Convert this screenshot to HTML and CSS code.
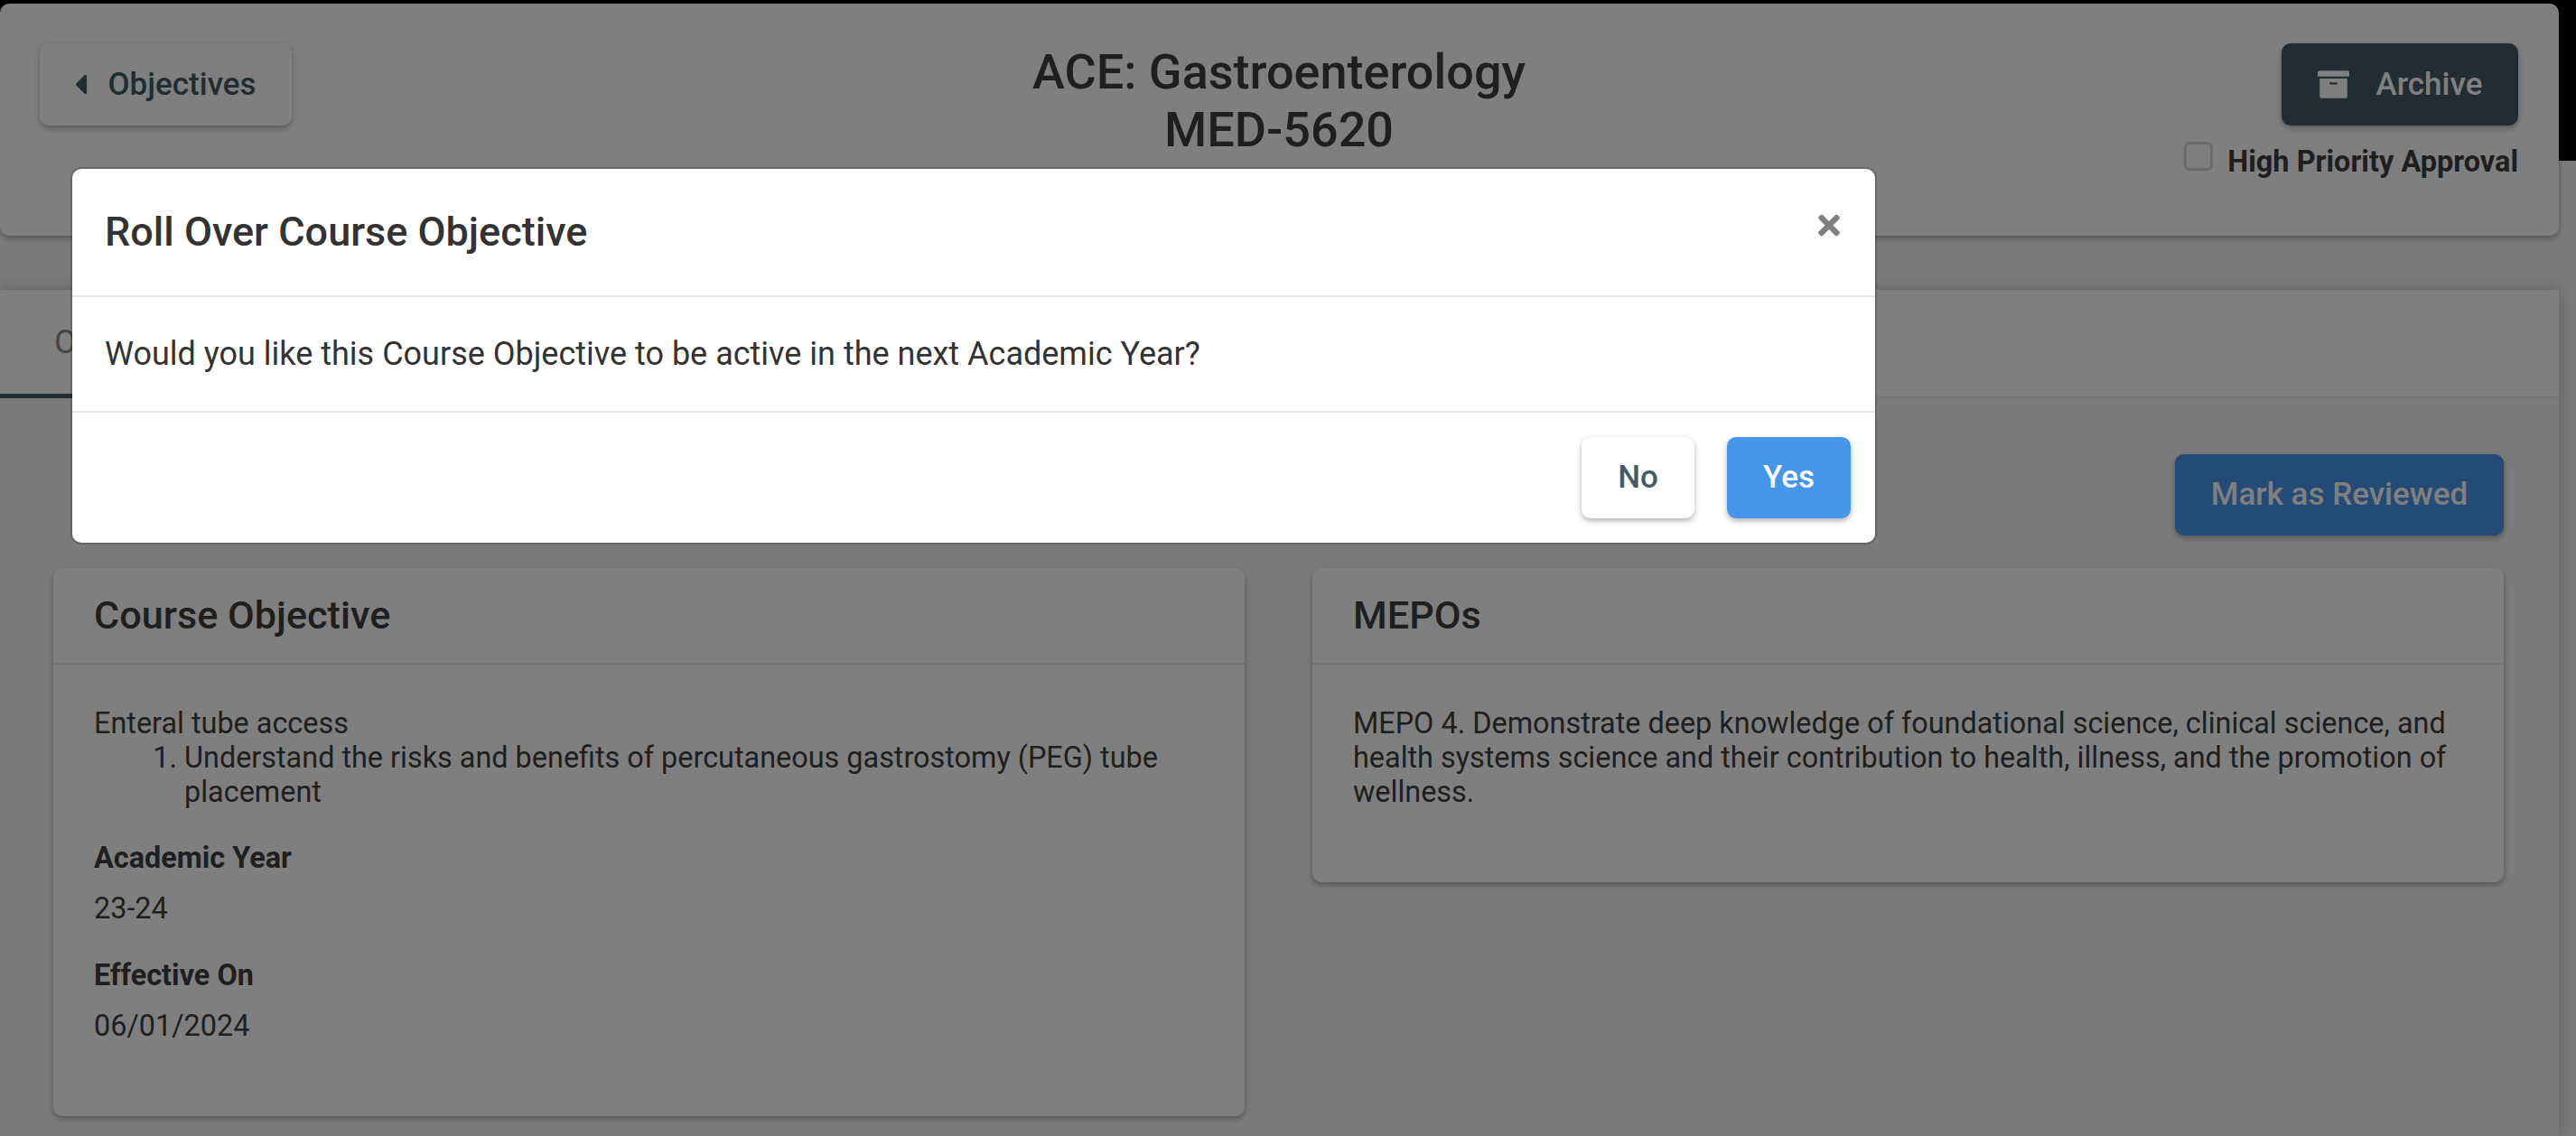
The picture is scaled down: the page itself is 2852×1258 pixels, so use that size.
FILE: index.html
```html
<!DOCTYPE html>
<html lang="en">
<head>
<meta charset="utf-8">
<title>Roll Over Course Objective</title>
<link rel="stylesheet" href="styles.css">
</head>
<body>
<div class="shell">
  <main class="main">
    <header class="head">
      <div class="head-left">
        <button class="btn btn-light btn-back">
          <svg class="caret" viewBox="20 110 175 292"><path d="M192 127.338v257.324c0 17.818-21.543 26.741-34.142 14.142L29.196 270.142c-7.81-7.81-7.81-20.474 0-28.284l128.662-128.662c12.599-12.6 34.142-3.676 34.142 14.142z"/></svg>
          Objectives
        </button>
      </div>
      <h1 class="title">ACE: Gastroenterology<br>MED-5620</h1>
      <div class="head-right">
        <button class="btn btn-dark">
          <svg class="archive" viewBox="0 32 512 448"><path d="M32 448c0 17.7 14.3 32 32 32h384c17.700 0 32-14.300 32-32V160H32v288zm160-212c0-6.600 5.400-12 12-12h104c6.600 0 12 5.400 12 12v8c0 6.600-5.400 12-12 12H204c-6.600 0-12-5.400-12-12v-8zM480 32H32C14.300 32 0 46.300 0 64v48c0 8.800 7.200 16 16 16h480c8.800 0 16-7.200 16-16V64c0-17.700-14.300-32-32-32z"/></svg>
          Archive
        </button>
        <div class="priority">
          <span class="check"></span>
          <span class="priority-label">High Priority Approval</span>
        </div>
      </div>
    </header>

    <section class="panel">
      <nav class="tabs"><span class="tab">Objectives</span></nav>
      <div class="panel-body">
        <div class="actions"><button class="btn btn-blue">Mark as Reviewed</button></div>
        <div class="cards">
          <article class="card card-objective">
            <h2 class="card-title">Course Objective</h2>
            <div class="card-body">
              <div class="rich">Enteral tube access</div>
              <ol class="list">
                <li>Understand the risks and benefits of percutaneous gastrostomy (PEG) tube placement</li>
              </ol>
              <div class="label label-first">Academic Year</div>
              <div class="value">23-24</div>
              <div class="label">Effective On</div>
              <div class="value">06/01/2024</div>
            </div>
          </article>
          <article class="card card-mepo">
            <h2 class="card-title">MEPOs</h2>
            <div class="card-body">
              <div class="rich">MEPO 4. Demonstrate deep knowledge of foundational science, clinical science, and health systems science and their contribution to health, illness, and the promotion of wellness.</div>
            </div>
          </article>
        </div>
      </div>
    </section>
  </main>
  <aside class="edge"><div class="edge-dark"></div></aside>
</div>

<div class="overlay"></div>

<div class="modal">
  <div class="modal-head">
    <h3 class="modal-title">Roll Over Course Objective</h3>
    <svg class="close" viewBox="0 70 352 372"><path d="M242.720 256l100.070-100.070c12.280-12.280 12.280-32.190 0-44.480l-22.240-22.240c-12.280-12.280-32.190-12.280-44.480 0L176 189.280 75.930 89.210c-12.280-12.280-32.190-12.280-44.480 0L9.210 111.450c-12.280 12.280-12.280 32.190 0 44.480L109.280 256 9.210 356.070c-12.280 12.280-12.280 32.190 0 44.480l22.240 22.240c12.280 12.280 32.200 12.280 44.480 0L176 322.720l100.070 100.070c12.280 12.280 32.200 12.280 44.480 0l22.240-22.240c12.280-12.280 12.280-32.190 0-44.480L242.720 256z"/></svg>
  </div>
  <div class="modal-body">Would you like this Course Objective to be active in the next Academic Year?</div>
  <div class="modal-foot">
    <button class="btn btn-white">No</button>
    <button class="btn btn-primary">Yes</button>
  </div>
</div>
</body>
</html>
```
FILE: styles.css
```css
* { box-sizing: border-box; }
html, body { margin: 0; height: 100%; }
body {
  position: relative;
  width: 2852px;
  height: 1258px;
  overflow: hidden;
  background: #f5f5f5;
  font-family: Roboto, "Liberation Sans", sans-serif;
  color: #3f3f3f;
}
.shell { display: flex; height: 1258px; }
.main { width: 2833px; flex: none; padding-top: 4px; background: linear-gradient(#000 0 14px, #f5f5f5 14px); }
.edge { flex: 1; }
.edge-dark { height: 178px; background: #000; }

.overlay { position: absolute; inset: 0; background: rgba(0, 0, 0, .5); }

.btn {
  display: inline-flex;
  align-items: center;
  justify-content: center;
  border: 0;
  border-radius: 10px;
  padding: 0 0 1px;
  font-family: inherit;
  font-weight: 500;
  font-size: 35px;
  height: 91px;
  box-shadow: 0 3px 6px rgba(0, 0, 0, .3);
}
.btn-light { background: #fff; color: #455a64; }
.btn-dark { background: #455a64; color: #fff; }
.btn-blue { background: #4696ec; color: #fff; }
.btn-white { background: #fff; color: #455a64; }
.btn-primary { background: #4696ec; color: #fff; }

.head {
  height: 257px;
  background: #fff;
  border-radius: 10px;
  box-shadow: 0 3px 6px rgba(0, 0, 0, .3);
  display: grid;
  grid-template-columns: 1fr auto 1fr;
  padding: 44px 45px 0 44px;
}
.head-left { display: flex; align-items: flex-start; }
.btn-back { width: 279px; gap: 22px; }
.caret { width: 14px; height: 21px; fill: #455a64; }
.title {
  margin: 0;
  text-align: center;
  font-size: 54px;
  line-height: 64px;
  font-weight: 500;
  color: #3f3f3f;
}
.head-right { display: flex; flex-direction: column; align-items: flex-end; }
.btn-dark { width: 262px; gap: 30px; }
.archive { width: 35px; height: 31px; fill: #fff; }
.priority { display: flex; align-items: flex-start; gap: 16px; margin-top: 18px; }
.check { width: 32px; height: 32px; background: #fff; border: 3px solid #d4d4d4; border-radius: 6px; }
.priority-label { font-size: 32.5px; font-weight: 700; line-height: 38px; margin-top: 3px; color: #3f3f3f; }

.panel { margin-top: 60px; box-shadow: 0 0 18px rgba(0, 0, 0, .2); height: 937px; }
.tabs { height: 120px; background: #fff; border-bottom: 2px solid #ececec; }
.tab { display: inline-block; height: 120px; padding: 37px 60px 0; font-size: 36px; border-bottom: 5px solid #455a64; color: #8c8c8c; }
.panel-body { padding: 62px 61px 0 59px; }
.actions { display: flex; justify-content: flex-end; }
.btn-blue { width: 364px; height: 90px; }
.cards { display: flex; align-items: flex-start; gap: 75px; margin-top: 36px; }
.card {
  width: 1320px;
  background: #fff;
  border-radius: 10px;
  box-shadow: 0 3px 6px rgba(0, 0, 0, .3);
}
.card-objective { height: 607px; }
.card-mepo { height: 348px; }
.card-title {
  margin: 0;
  height: 107px;
  padding: 28px 45px 0;
  font-size: 43.2px;
  line-height: 50px;
  font-weight: 500;
  border-bottom: 2px solid #e3e6ea;
  color: #3f3f3f;
}
.card-body { padding: 46px 45px 0; font-size: 32.4px; line-height: 38px; }
.list { margin: 0; padding-left: 100px; }
.label { font-weight: 700; margin-top: 36px; }
.label-first { margin-top: 35px; }
.value { margin-top: 18px; }

.modal {
  position: absolute;
  left: 80px;
  top: 187px;
  width: 1996px;
  height: 414px;
  background: #fff;
  border-radius: 10px;
  box-shadow: 0 0 0 2px rgba(0, 0, 0, .18);
}
.modal-head {
  height: 142px;
  border-bottom: 2px solid #e3e6ea;
  padding: 44px 38px 0 36px;
  display: flex;
  justify-content: space-between;
  align-items: flex-start;
}
.modal-title { margin: 0; font-size: 45px; line-height: 52px; font-weight: 500; color: #333; }
.close { width: 26px; height: 25px; margin-top: 6px; fill: #808080; }
.modal-body {
  height: 128px;
  border-bottom: 2px solid #e3e6ea;
  padding: 41px 36px 0;
  font-size: 36px;
  line-height: 44px;
  color: #333;
}
.modal-foot { display: flex; justify-content: flex-end; gap: 36px; padding: 27px 27px 0; }
.btn-white { width: 125px; height: 90px; }
.btn-primary { width: 137px; height: 90px; }
```
